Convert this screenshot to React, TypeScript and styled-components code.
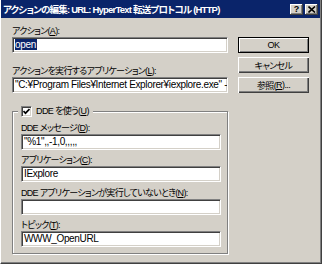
import React from 'react'
import styled, { createGlobalStyle } from 'styled-components'

const FACE = '#d4d0c8'
const NAVY = '#0a246a'

const GlobalStyle = createGlobalStyle`
  html, body {
    margin: 0;
    padding: 0;
    background: ${FACE};
  }
  body {
    font-family: "Liberation Sans", "Noto Sans CJK JP", sans-serif;
    font-size: 9px;
    color: #000;
  }
  * {
    box-sizing: border-box;
  }
`

const Frame = styled.div`
  width: 322px;
  height: 264px;
  background: ${FACE};
  border-left: 1px solid #fff;
  border-right: 1px solid #404040;
  border-bottom: 1px solid #404040;
  box-shadow: inset -1px -1px 0 #808080;
  padding: 0 1px 1px 0;
  overflow: hidden;
`

const TitleBar = styled.div`
  height: 18px;
  display: flex;
  align-items: center;
  padding: 0 2px 0 2px;
  background: ${NAVY};
  color: #fff;
`

const TitleText = styled.span`
  flex: 1;
  font-size: 9.5px;
  font-weight: bold;
  letter-spacing: -0.8px;
  white-space: nowrap;
  overflow: hidden;
  font-feature-settings: 'palt';
`

const CaptionButtons = styled.div`
  display: flex;
  gap: 2px;
`

const CaptionButton = styled.div`
  width: 13px;
  height: 11px;
  display: flex;
  align-items: center;
  justify-content: center;
  background: ${FACE};
  color: #000;
  font-size: 9px;
  font-weight: bold;
  line-height: 11px;
  box-shadow: inset -1px -1px 0 #404040, inset 1px 1px 0 #fff,
    inset -2px -2px 0 #808080;
`

const Body = styled.div`
  display: grid;
  grid-template-columns: 216px 71px;
  column-gap: 10px;
  padding: 8px 0 0 11px;
`

const Column = styled.div`
  display: flex;
  flex-direction: column;
`

const Label = styled.div<{ $gap?: number }>`
  height: 11px;
  line-height: 11px;
  margin-top: ${(p) => p.$gap ?? 0}px;
  white-space: nowrap;
  letter-spacing: -0.7px;
  font-feature-settings: 'palt';
`

const Field = styled.div`
  height: 16px;
  background: #fff;
  border-top: 1px solid #808080;
  border-left: 1px solid #808080;
  border-bottom: 1px solid #fff;
  border-right: 1px solid #fff;
  box-shadow: inset 1px 1px 0 #404040, inset -1px -1px 0 ${FACE};
  padding: 0 2px;
  font-size: 10px;
  letter-spacing: -0.35px;
  line-height: 14px;
  white-space: nowrap;
  overflow: hidden;
`

const Selected = styled.span`
  background: ${NAVY};
  color: #fff;
  padding: 0 1px 0 0;
`

const GroupBox = styled.div`
  position: relative;
  margin-top: 18px;
  height: 143px;
  border: 1px solid #808080;
  box-shadow: inset 1px 1px 0 #fff, 1px 1px 0 #fff;
  padding: 11px 6px 6px 8px;
  display: flex;
  flex-direction: column;
`

const GroupHeader = styled.label`
  position: absolute;
  top: -6px;
  left: 5px;
  height: 11px;
  display: flex;
  align-items: center;
  gap: 4px;
  padding: 0 4px 0 3px;
  background: ${FACE};
  line-height: 11px;
  white-space: nowrap;
  letter-spacing: -0.6px;
  font-feature-settings: 'palt';
`

const CheckBox = styled.span`
  width: 11px;
  height: 11px;
  background: #fff;
  border-top: 1px solid #808080;
  border-left: 1px solid #808080;
  border-bottom: 1px solid #fff;
  border-right: 1px solid #fff;
  box-shadow: inset 1px 1px 0 #404040, inset -1px -1px 0 ${FACE};
  display: flex;
  align-items: center;
  justify-content: center;
`

const Buttons = styled.div`
  display: flex;
  flex-direction: column;
  gap: 4px;
  padding-top: 11px;
`

const Button = styled.div<{ $default?: boolean }>`
  height: 16px;
  display: flex;
  align-items: center;
  justify-content: center;
  background: ${FACE};
  letter-spacing: -0.6px;
  font-feature-settings: 'palt';
  border: ${(p) => (p.$default ? '1px solid #000' : 'none')};
  box-shadow: ${(p) =>
    p.$default
      ? 'inset 1px 1px 0 #fff, inset -1px -1px 0 #808080'
      : `inset 1px 1px 0 #fff, inset -1px -1px 0 #404040, inset -2px -2px 0 #808080`};
`

const CloseIcon = () => (
  <svg width="8" height="7" viewBox="0 0 8 7">
    <path d="M0.5 0.5 L7 6.5 M7 0.5 L0.5 6.5" stroke="#000" strokeWidth="1.6" />
  </svg>
)

const CheckMark = () => (
  <svg width="7" height="7" viewBox="0 0 7 7">
    <polyline points="0.5,3 2.5,5.2 6.5,1" fill="none" stroke="#000" strokeWidth="1.7" />
  </svg>
)

export default function App() {
  return (
    <>
      <GlobalStyle />
      <Frame>
        <TitleBar>
          <TitleText>アクションの編集: URL: HyperText 転送プロトコル (HTTP)</TitleText>
          <CaptionButtons>
            <CaptionButton>?</CaptionButton>
            <CaptionButton>
              <CloseIcon />
            </CaptionButton>
          </CaptionButtons>
        </TitleBar>
        <Body>
          <Column>
            <Label>
              アクション(<u>A</u>):
            </Label>
            <Field>
              <Selected>open</Selected>
            </Field>
            <Label $gap={13}>
              アクションを実行するアプリケーション(<u>L</u>):
            </Label>
            <Field>"C:¥Program Files¥Internet Explorer¥iexplore.exe" -</Field>
            <GroupBox>
              <GroupHeader>
                <CheckBox>
                  <CheckMark />
                </CheckBox>
                <span>
                  DDE を使う(<u>U</u>)
                </span>
              </GroupHeader>
              <Label>
                DDE メッセージ(<u>D</u>):
              </Label>
              <Field>"%1",,-1,0,,,,,</Field>
              <Label $gap={5}>
                アプリケーション(<u>C</u>):
              </Label>
              <Field>IExplore</Field>
              <Label $gap={6}>
                DDE アプリケーションが実行していないとき(<u>N</u>):
              </Label>
              <Field />
              <Label $gap={5}>
                トピック(<u>T</u>):
              </Label>
              <Field>WWW_OpenURL</Field>
            </GroupBox>
          </Column>
          <Buttons>
            <Button $default>OK</Button>
            <Button>キャンセル</Button>
            <Button>
              参照(<u>R</u>)...
            </Button>
          </Buttons>
        </Body>
      </Frame>
    </>
  )
}
